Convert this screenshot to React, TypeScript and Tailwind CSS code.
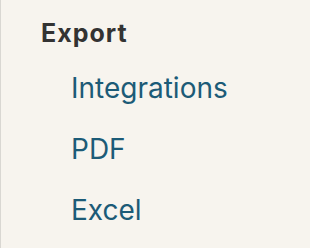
import React from 'react';

const links = ['Integrations', 'PDF', 'Excel'];

export default function App() {
  return (
    <div
      className="w-[310px] h-[248px] bg-[#f7f4ee] border-l border-[#d9d7d2] overflow-hidden"
      style={{ fontFamily: 'Inter, "Noto Sans", sans-serif' }}
    >
      <div className="pl-[40px] pt-[18px]">
        <h3 className="text-[25px] leading-[30px] font-bold tracking-[1px] text-[#333333]">Export</h3>
        <ul className="pl-[30px] mt-[22px] flex flex-col gap-[25px]">
          {links.map((l) => (
            <li key={l}>
              <a className="text-[28px] leading-[36px] text-[#1c5b77]">{l}</a>
            </li>
          ))}
        </ul>
      </div>
    </div>
  );
}
